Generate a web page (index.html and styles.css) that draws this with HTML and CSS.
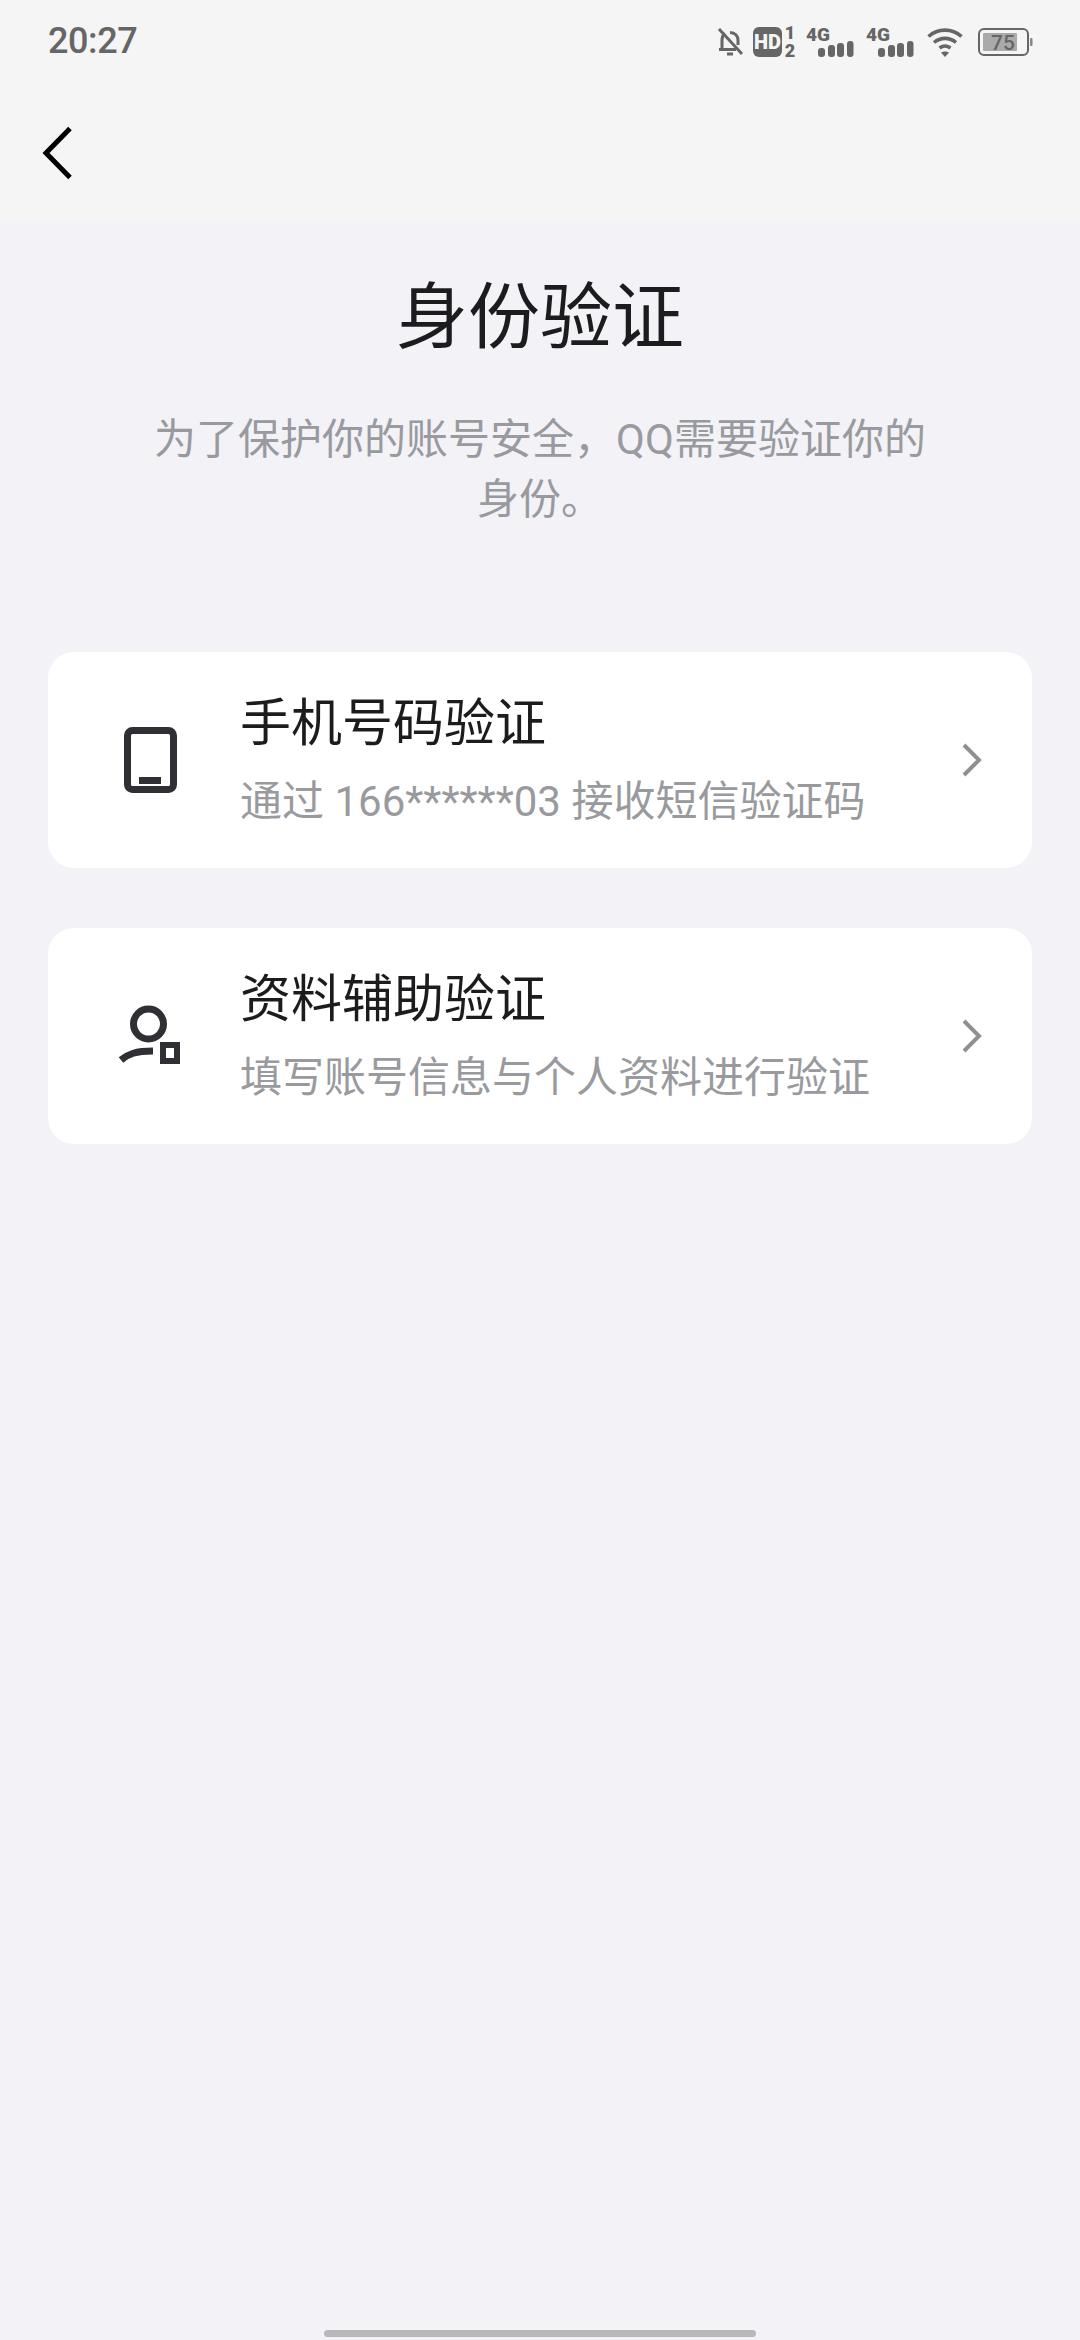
FILE: index.html
```html
<!DOCTYPE html>
<html lang="zh-CN">
<head>
<meta charset="utf-8">
<title>身份验证</title>
<link rel="stylesheet" href="styles.css">
</head>
<body>
<div class="page">
  <header class="top">
    <div class="status">
      <span class="time">20:27</span>
      <div class="status-icons">
        <svg class="ic-bell" width="28" height="44" viewBox="0 -7 28 44"><path d="M6 21.500V13c0-3 1-5 3-6.500M22 18v-5c0-4-3-7.500-8-7.500" fill="none" stroke="#666" stroke-width="3"/><path d="M3 22.500h17M11 27h6M3 2l23 25" fill="none" stroke="#666" stroke-width="3"/></svg>
        <svg class="ic-hd" width="43" height="44" viewBox="0 -6 43 44"><rect x="0" y="1" width="29" height="30" rx="6" fill="#666"/><text x="14.500" y="23" class="t-hd">HD</text><text x="37" y="13" class="t-sim">1</text><text x="37" y="31" class="t-sim">2</text></svg>
        <svg class="ic-sig" width="48" height="44" viewBox="0 -6 48 44"><text x="0" y="15" class="t-4g">4G</text><rect x="12" y="22" width="7" height="9" rx="3" fill="#666"/><rect x="22" y="19" width="7" height="12" rx="3" fill="#666"/><rect x="31" y="17" width="7" height="14" rx="3" fill="#666"/><rect x="41" y="15" width="6.500" height="16" rx="3" fill="#666"/></svg>
        <svg class="ic-sig" width="48" height="44" viewBox="0 -6 48 44"><text x="0" y="15" class="t-4g">4G</text><rect x="12" y="22" width="7" height="9" rx="3" fill="#666"/><rect x="22" y="19" width="7" height="12" rx="3" fill="#666"/><rect x="31" y="17" width="7" height="14" rx="3" fill="#666"/><rect x="41" y="15" width="6.500" height="16" rx="3" fill="#666"/></svg>
        <svg class="ic-wifi" width="36" height="44" viewBox="0 -7 36 44"><path d="M1.500 9.500C11 1 25 1 34.500 9.500M7 15.500c6.500-5.500 15.500-5.500 22 0M12.500 21c3.500-2.500 7.500-2.500 11 0" fill="none" stroke="#666" stroke-width="3.600"/><path d="M14 25.500c2.500-1.500 5.500-1.500 8 0L18 30z" fill="#666"/></svg>
        <svg class="ic-bat" width="55" height="44" viewBox="0 -8 55 44"><rect x="1" y="1" width="49" height="26" rx="5" fill="none" stroke="#666" stroke-width="2"/><rect x="5" y="5" width="34" height="18" rx="1" fill="#aaa"/><rect x="52" y="10" width="2.500" height="8" rx="1" fill="#888"/><text x="25" y="22" class="t-bat">75</text></svg>
      </div>
    </div>
    <div class="nav">
      <svg width="32" height="56" viewBox="0 0 32 56"><path d="M28 3.500 4 28l24 24.500" fill="none" stroke="#000" stroke-width="5"/></svg>
    </div>
  </header>

  <main class="content">
    <h1 class="title">身份验证</h1>
    <p class="desc">为了保护你的账号安全，QQ需要验证你的身份。</p>

    <div class="options">
      <a class="card">
        <span class="card-icon">
          <svg width="60" height="70" viewBox="0 0 60 70"><rect x="7.500" y="5.500" width="46" height="59" rx="5" fill="none" stroke="#2f3033" stroke-width="7"/><rect x="19" y="52" width="22" height="7" fill="#2f3033"/></svg>
        </span>
        <span class="card-text">
          <span class="card-title">手机号码验证</span>
          <span class="card-sub">通过 166******03 接收短信验证码</span>
        </span>
        <svg class="chev" width="22" height="36" viewBox="0 0 22 36"><path d="M3 3l15 15L3 33" fill="none" stroke="#909094" stroke-width="4"/></svg>
      </a>
      <a class="card">
        <span class="card-icon">
          <svg width="66" height="70" viewBox="0 0 66 70"><circle cx="31.500" cy="23" r="15" fill="none" stroke="#2f3033" stroke-width="7"/><path d="M4 59c7-6 15-9 32-9" fill="none" stroke="#2f3033" stroke-width="7"/><rect x="46" y="44" width="14" height="16" fill="none" stroke="#2f3033" stroke-width="6"/></svg>
        </span>
        <span class="card-text">
          <span class="card-title">资料辅助验证</span>
          <span class="card-sub">填写账号信息与个人资料进行验证</span>
        </span>
        <svg class="chev" width="22" height="36" viewBox="0 0 22 36"><path d="M3 3l15 15L3 33" fill="none" stroke="#909094" stroke-width="4"/></svg>
      </a>
    </div>
  </main>

  <div class="home-wrap"><div class="home-bar"></div></div>
</div>
</body>
</html>
```
FILE: styles.css
```css
* { box-sizing: border-box; }
html, body { margin: 0; padding: 0; }
body {
  width: 1080px;
  height: 2340px;
  background: #f2f2f7;
  font-family: Roboto, "Noto Sans CJK SC", sans-serif;
  overflow: hidden;
}
.page {
  display: flex;
  flex-direction: column;
  height: 2340px;
}
.top {
  height: 220px;
  background: #f5f5f5;
  flex: none;
}
.status {
  height: 80px;
  display: flex;
  align-items: center;
  justify-content: space-between;
  padding: 0 48px 0 48px;
}
.time {
  font-size: 36px;
  font-weight: 500;
  letter-spacing: -0.4px;
  color: #666;
  margin-top: 2px;
}
.status-icons {
  display: flex;
  align-items: center;
  margin-right: -1px;
  margin-top: 4px;
}
.ic-bell { margin-right: 9px; }
.ic-hd { margin-right: 10px; }
.ic-sig { margin-right: 12px; }
.ic-wifi { margin-left: 1px; margin-right: 15px; }
.status-icons text { font-family: Roboto, sans-serif; font-weight: 700; fill: #666; text-anchor: middle; }
.status-icons .t-hd { font-size: 20px; fill: #f5f5f5; font-weight: 900; }
.status-icons .t-sim { font-size: 18px; font-weight: 900; }
.status-icons .t-4g { font-size: 19px; font-weight: 900; text-anchor: start; }
.status-icons .t-bat { font-size: 21px; font-weight: 500; }
.nav {
  height: 140px;
  padding-top: 5px;
  display: flex;
  align-items: center;
  padding-left: 42px;
}
.content {
  flex: 1;
  display: flex;
  flex-direction: column;
  align-items: center;
}
.title {
  margin: 56px 0 0;
  font-size: 72px;
  line-height: 84px;
  font-weight: 400;
  color: #1c1c1e;
  text-align: center;
}
.desc {
  margin: 50px 0 0;
  width: 800px;
  font-size: 42px;
  line-height: 60px;
  color: #999a9e;
  text-align: center;
}
.options {
  margin-top: 122px;
  width: 984px;
  display: flex;
  flex-direction: column;
  gap: 60px;
}
.card {
  height: 216px;
  background: #fff;
  border-radius: 26px;
  display: flex;
  align-items: center;
  padding: 0 0 0 67px;
}
.card-icon {
  width: 70px;
  display: flex;
  justify-content: center;
  flex: none;
}
.card-text {
  display: flex;
  flex-direction: column;
  flex: 1;
  margin-left: 55px;
}
.card-title {
  font-size: 51px;
  line-height: 70px;
  color: #1c1c1e;
}
.card-sub {
  margin-top: 13px;
  font-size: 42px;
  line-height: 60px;
  color: #999a9e;
}
.chev { margin-right: 49px; flex: none; }
.home-wrap {
  flex: none;
  display: flex;
  justify-content: center;
  padding-bottom: 3px;
}
.home-bar {
  width: 432px;
  height: 7px;
  border-radius: 4px;
  background: #b8b8ba;
}
```
